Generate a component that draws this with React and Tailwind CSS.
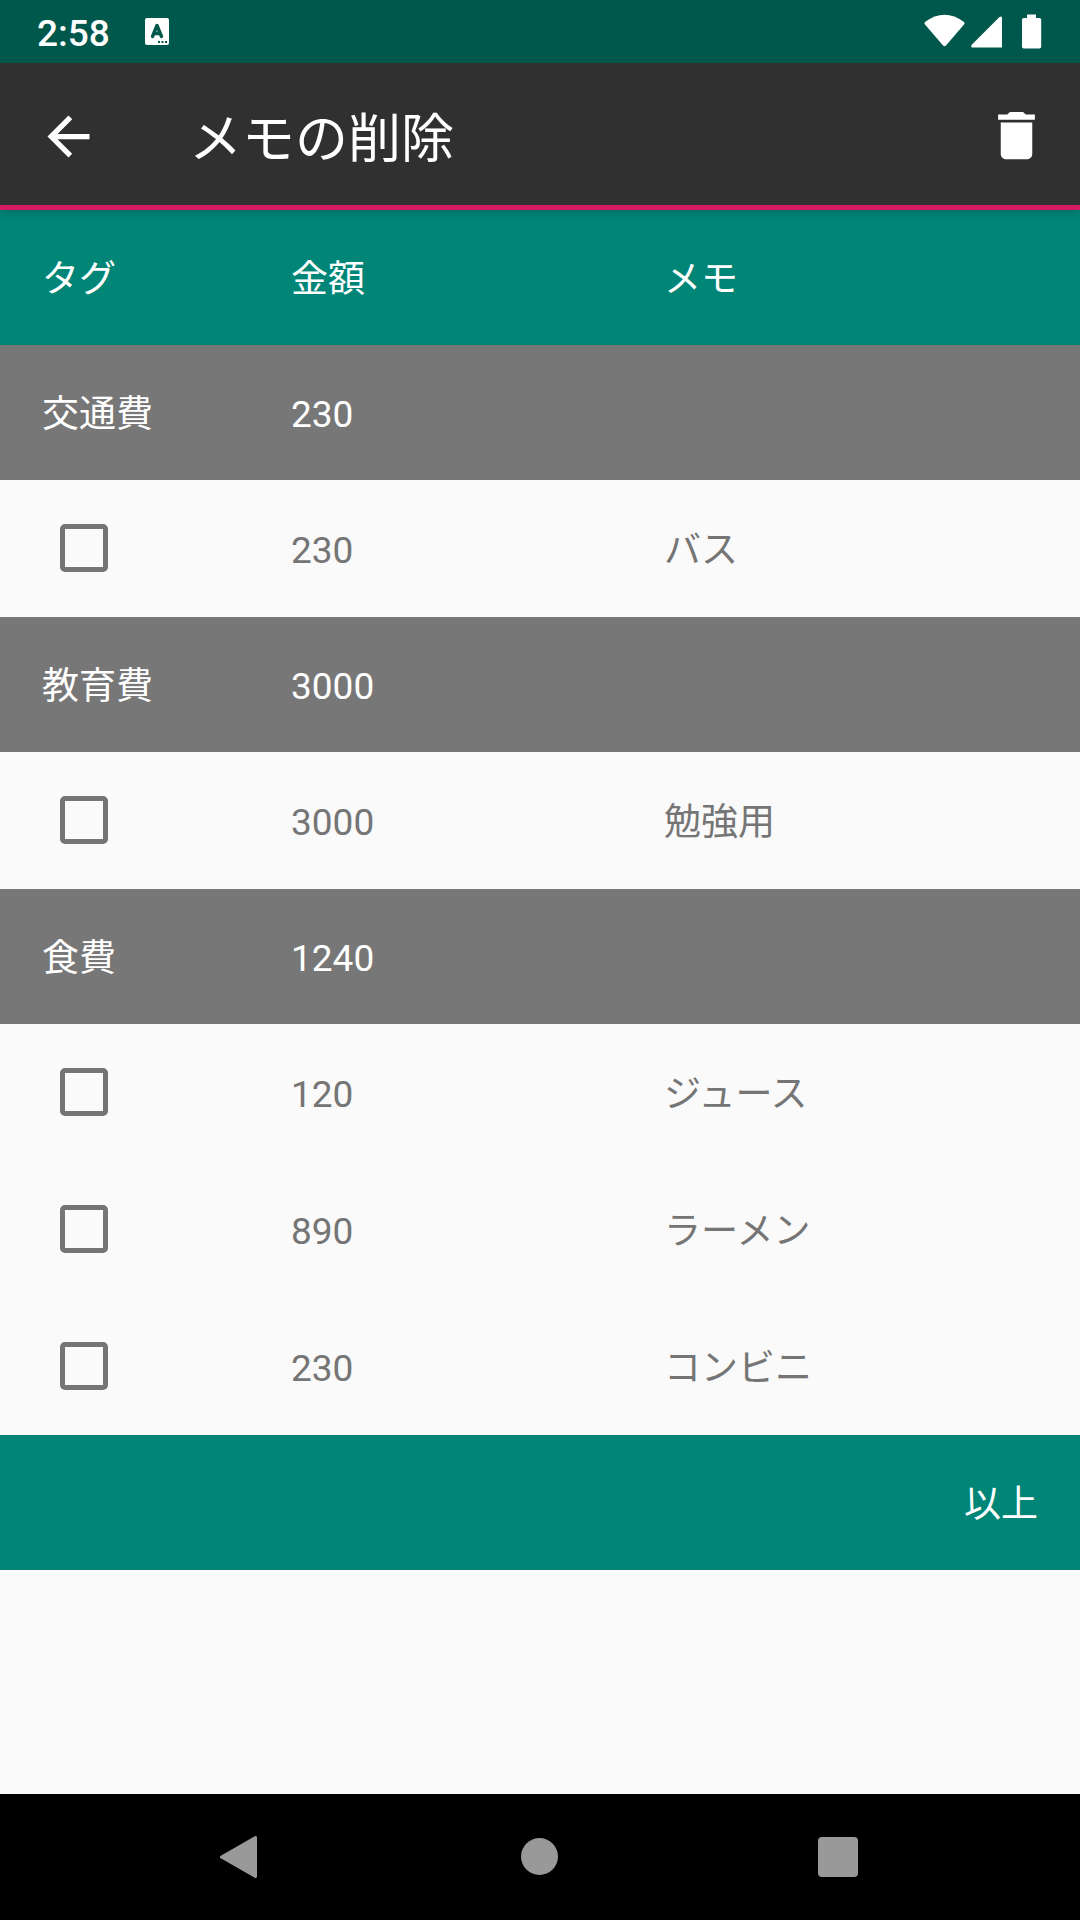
const rows = [
  { type: "head", tag: "タグ", amount: "金額", memo: "メモ" },
  { type: "group", tag: "交通費", amount: "230" },
  { type: "item", amount: "230", memo: "バス" },
  { type: "group", tag: "教育費", amount: "3000" },
  { type: "item", amount: "3000", memo: "勉強用" },
  { type: "group", tag: "食費", amount: "1240" },
  { type: "item", amount: "120", memo: "ジュース" },
  { type: "item", amount: "890", memo: "ラーメン" },
  { type: "item", amount: "230", memo: "コンビニ" },
];

const rowStyles = {
  head: "h-[135px] bg-[#008577] text-white",
  group: "h-[135px] bg-[#777777] text-white",
  item: "h-[137px] bg-[#fafafa] text-[#757575]",
};

function StatusBar() {
  return (
    <div className="flex h-[63px] shrink-0 items-center bg-[#00574b] pl-[37px] pr-[38px] text-white">
      <span className="w-[108px] pt-[3px] text-[37px] leading-none font-medium">2:58</span>
      <svg className="h-[27px] w-6" viewBox="0 0 24 27">
        <rect width="24" height="27" rx="2" fill="#fff" />
        <path d="M7.500 18.500L12 7.500L16.500 18.500M9 15.500h6" fill="none" stroke="#00574b" strokeWidth="3.400" strokeLinecap="round" strokeLinejoin="round" />
        <path d="M13 23h2v2h-2zM16.500 23h2v2h-2zM20 23h2v2h-2z" fill="#00574b" />
      </svg>
      <svg className="ml-auto h-9 w-[118px]" viewBox="924 13.500 118 36" fill="#fff">
        <path d="M925 21.500Q944.500 7 964 21.500Q965 22.500 964 24L946 45Q944.500 46.500 943 45L925 24Q924 22.500 925 21.500Z" />
        <path d="M971.500 44.500L999.500 16.500Q1002 15 1002 17.500V47H972Q970.500 46.500 971.500 44.500Z" />
        <path d="M1027 14h9v3.500h3.500q1.700 0 1.700 1.700V46q0 2-1.700 2h-15.800q-1.700 0-1.700-2V19.200q0-1.700 1.700-1.700H1027z" />
      </svg>
    </div>
  );
}

function AppBar() {
  return (
    <header className="relative z-10 flex h-[147px] shrink-0 items-center border-b-[5px] border-[#d81b60] bg-[#303030] pl-[37px] pr-8 text-white shadow-[0_3px_8px_rgba(0,0,0,0.14)]">
      <svg className="mt-1 size-[63px]" viewBox="0 0 24 24" fill="currentColor">
        <path d="M20 11H7.830l5.590-5.590L12 4l-8 8 8 8 1.410-1.410L7.830 13H20v-2z" />
      </svg>
      <h1 className="mt-3 ml-[89px] text-[53px] leading-none">メモの削除</h1>
      <svg className="mt-0.5 ml-auto size-[63px]" viewBox="0 0 24 24" fill="currentColor">
        <path d="M6 19c0 1.100.9 2 2 2h8c1.100 0 2-.9 2-2V7H6v12zM19 4h-3.500l-1-1h-5l-1 1H5v2h14V4z" />
      </svg>
    </header>
  );
}

function Row({ type, tag, amount, memo }) {
  return (
    <div className={`grid shrink-0 grid-cols-[249px_373px_1fr] items-center px-[42px] ${rowStyles[type]}`}>
      {type === "item" ? (
        <div role="checkbox" aria-checked="false" className="mb-px ml-[18px] size-12 rounded-[5px] border-[5px] border-[#757575]" />
      ) : (
        <span className="pt-1">{tag}</span>
      )}
      <span className="pt-1">{amount}</span>
      <span className="pt-1">{memo}</span>
    </div>
  );
}

function NavBar() {
  return (
    <nav className="flex h-[126px] shrink-0 items-center bg-black">
      <svg className="ml-[219px] h-11 w-[39px]" viewBox="0 0 39 44">
        <path d="M2.500 22L36.500 2.500V41.500Z" fill="#999" stroke="#999" strokeWidth="3" strokeLinejoin="round" />
      </svg>
      <div className="mb-px ml-[263px] size-[37px] rounded-full bg-[#999]" />
      <div className="ml-[260px] size-10 rounded-[4px] bg-[#999]" />
    </nav>
  );
}

export default function App() {
  return (
    <div lang="ja" className="flex h-[1920px] w-[1080px] flex-col overflow-hidden bg-[#fafafa] font-[Roboto,'Noto_Sans_CJK_JP',sans-serif]">
      <StatusBar />
      <AppBar />
      <main className="flex flex-1 flex-col text-[37px] leading-none">
        {rows.map((row, i) => (
          <Row key={i} {...row} />
        ))}
        <div className="flex h-[135px] shrink-0 items-center justify-end bg-[#008577] px-[42px] pt-1 text-white">以上</div>
      </main>
      <NavBar />
    </div>
  );
}
